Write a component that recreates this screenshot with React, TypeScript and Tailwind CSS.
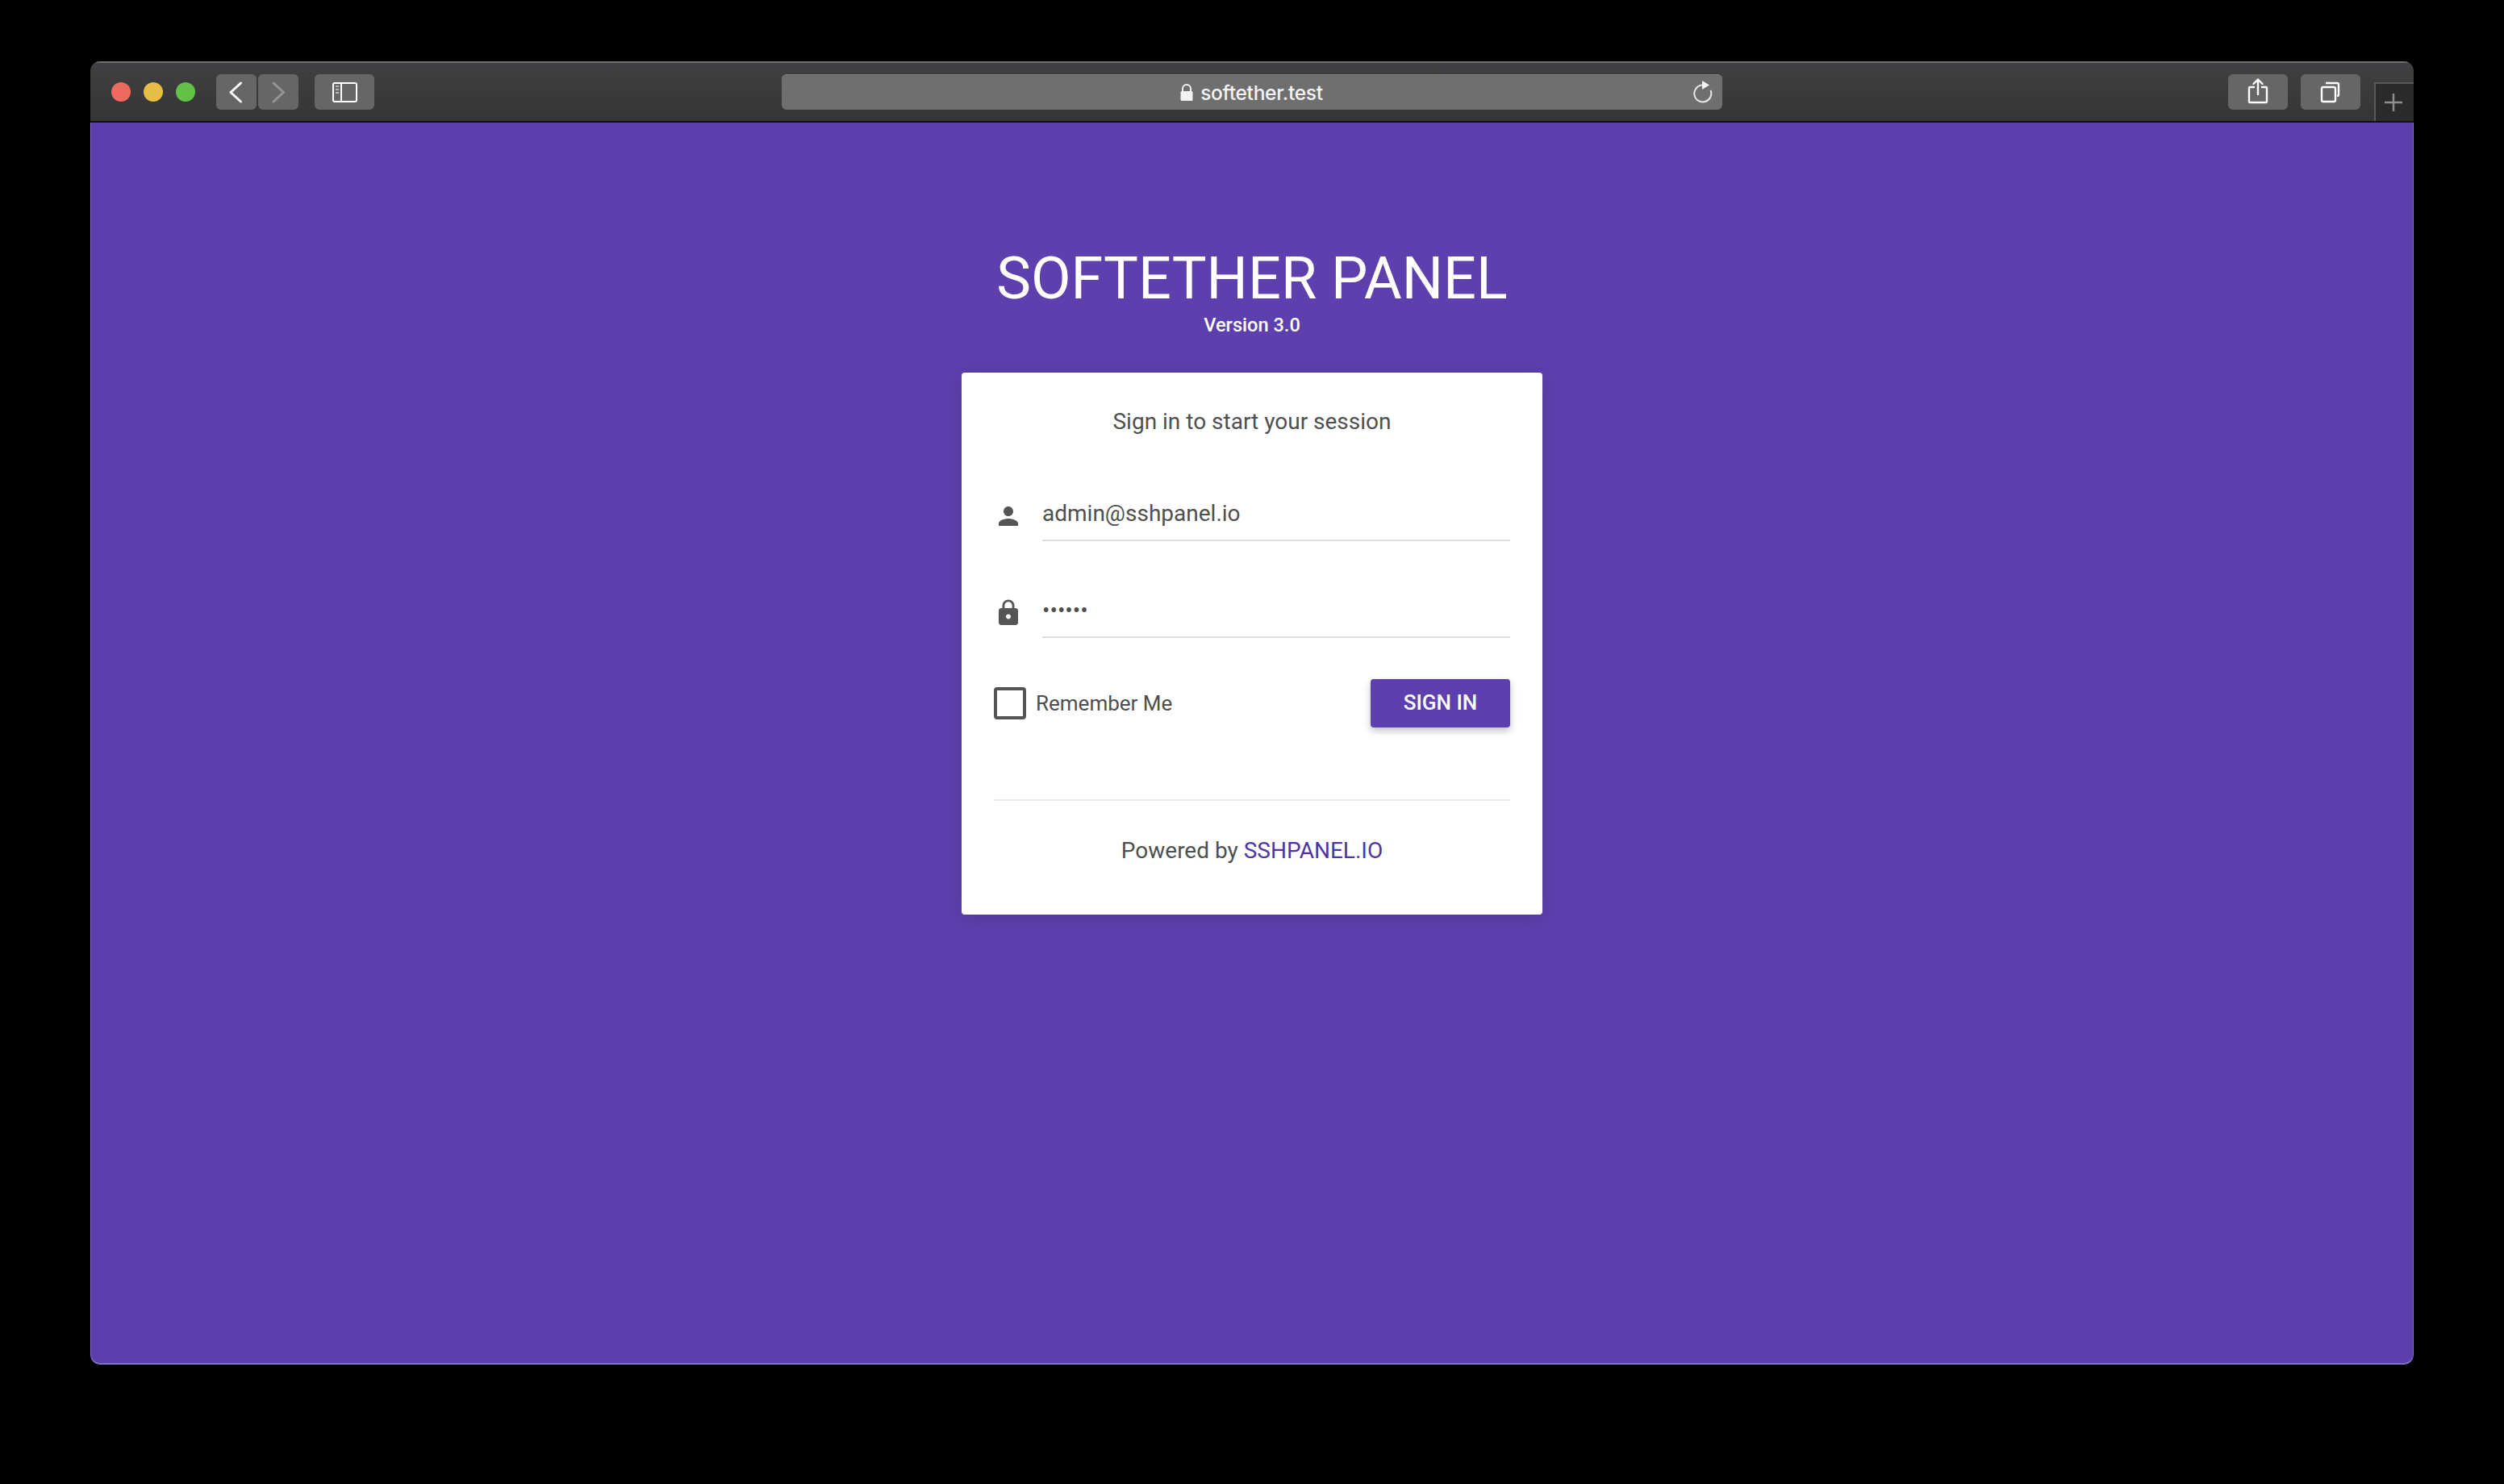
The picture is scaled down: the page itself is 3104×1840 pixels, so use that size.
import React from "react";

const Btn = ({ w, className = "", children }: { w: string; className?: string; children: React.ReactNode }) => (
  <div className={`${w} h-[44px] rounded-[6px] bg-[#666667] shrink-0 ${className}`}>{children}</div>
);

export default function App() {
  return (
    <div className="w-[3104px] h-[1840px] bg-black pt-[76px] pl-[112px] overflow-hidden font-['Roboto',sans-serif]">
      <div className="w-[2880px] h-[1616px] rounded-[12px] overflow-hidden flex flex-col">
        {/* Toolbar */}
        <div className="h-[76px] shrink-0 flex items-start pt-[14px] border-t-2 border-[#6f6f70] border-b-2 border-b-[#111] bg-gradient-to-b from-[#404042] to-[#353536]">
          <div className="flex gap-[16px] ml-[26px] mt-[10px] shrink-0">
            <div className="w-[24px] h-[24px] rounded-full bg-[#ec6a5e]" />
            <div className="w-[24px] h-[24px] rounded-full bg-[#e6bd46]" />
            <div className="w-[24px] h-[24px] rounded-full bg-[#62c146]" />
          </div>
          <Btn w="w-[50px]" className="ml-[26px]">
            <svg width="50" height="44" fill="none" stroke="#fff" strokeWidth="3" strokeLinecap="round" strokeLinejoin="round">
              <path d="M30.5 11 18 22.5 30.5 34" />
            </svg>
          </Btn>
          <Btn w="w-[50px]" className="ml-[2px]">
            <svg width="50" height="44" fill="none" stroke="#969697" strokeWidth="3" strokeLinecap="round" strokeLinejoin="round">
              <path d="M19 11 31.5 22.5 19 34" />
            </svg>
          </Btn>
          <Btn w="w-[74px]" className="ml-[20px]">
            <svg width="74" height="44" fill="none" stroke="#fff" strokeWidth="2">
              <rect x="23" y="11" width="29" height="23" rx="2" />
              <path d="M33 11v23" />
              <path d="M26 15h4M26 19h4M26 23h4" stroke="#b5b5b5" strokeWidth="2" />
            </svg>
          </Btn>
          {/* Address bar */}
          <div className="relative ml-[505px] w-[1166px] h-[44px] rounded-[6px] bg-[#6f6f70] border-t border-[#7c7c7d] shrink-0 flex items-center justify-center">
            <div className="flex items-center gap-[8px] -ml-[2px]">
              <svg width="18" height="21" viewBox="0 0 18 21" className="mt-[-1px]">
                <path d="M4 9V6a5 5 0 0 1 10 0v3" fill="none" stroke="#f2f2f2" strokeWidth="2" />
                <rect x="1.5" y="9" width="15" height="12" rx="1.5" fill="#f2f2f2" />
              </svg>
              <span className="text-[24.5px] leading-[32px] font-medium text-[#f4f4f4] font-['Inter',sans-serif] tracking-[-0.3px]">softether.test</span>
            </div>
            <svg width="24" height="28" viewBox="0 0 24 28" fill="none" className="absolute right-[12px] top-[7px]">
              <path d="M11 5.500A10.500 10.500 0 1 0 21.500 12" stroke="#e8e8e8" strokeWidth="2" />
              <path d="M11 0 20 5.500 11 11z" fill="#f2f2f2" />
            </svg>
          </div>
          <Btn w="w-[74px]" className="ml-[627px]">
            <svg width="74" height="44" fill="none" stroke="#fff" strokeWidth="2.4" strokeLinecap="round" strokeLinejoin="round">
              <path d="M32 16h-5a1 1 0 0 0-1 1v17a1 1 0 0 0 1 1h20a1 1 0 0 0 1-1V17a1 1 0 0 0-1-1h-5" />
              <path d="M37 25V7M31.5 12 37 6.500l5.500 5.500" />
            </svg>
          </Btn>
          <Btn w="w-[74px]" className="ml-[16px]">
            <svg width="74" height="44" fill="none" stroke="#fff" strokeWidth="2.4" strokeLinejoin="round">
              <rect x="26" y="16" width="17" height="18" rx="2" />
              <path d="M31 11h14a2 2 0 0 1 2 2v12a2 2 0 0 1-2 2" />
            </svg>
          </Btn>
          <div className="ml-[17px] flex-1 h-[48px] mt-[10px] self-start bg-[#2b2b2c] border-l-2 border-t-2 border-[#59595a] flex items-center justify-center pr-[4px]">
            <svg width="24" height="24" stroke="#8f8f90" strokeWidth="2.4">
              <path d="M1 12h22M12 1v22" />
            </svg>
          </div>
        </div>

        {/* Page */}
        <div className="flex-1 bg-[#5e3fae] border-x border-b-2 border-[#8571c4] rounded-b-[12px] flex flex-col items-center">
          <h1 className="mt-[152px] text-[72px] leading-[84px] font-normal text-white text-center">SOFTETHER PANEL</h1>
          <p className="mt-[-2px] text-[23.6px] leading-[34px] font-medium text-white text-center">Version 3.0</p>
          <div className="mt-[42px] w-[720px] h-[672px] bg-white rounded-[4px] shadow-[0_4px_24px_rgba(0,0,0,0.14)] px-[40px] flex flex-col text-[#4f4f4f]">
            <p className="mt-[41px] text-[28px] leading-[40px] text-center">Sign in to start your session</p>

            <div className="mt-[73px] flex items-start">
              <svg width="36" height="36" viewBox="0 0 24 24" fill="#555" className="mt-[6px] shrink-0">
                <path d="M12 12c2.21 0 4-1.79 4-4s-1.79-4-4-4-4 1.79-4 4 1.790 4 4 4zm0 2c-2.670 0-8 1.340-8 4v2h16v-2c0-2.660-5.330-4-8-4z" />
              </svg>
              <div className="ml-[24px] flex-1 h-[55px] pt-[1px] border-b-2 border-[#dcdcdc] text-[28px] leading-[40px]">admin@sshpanel.io</div>
            </div>

            <div className="mt-[65px] flex items-start">
              <svg width="36" height="36" viewBox="0 0 24 24" fill="#555" className="mt-[6px] shrink-0">
                <path d="M18 8h-1V6c0-2.760-2.240-5-5-5S7 3.240 7 6v2H6c-1.100 0-2 .9-2 2v10c0 1.100.9 2 2 2h12c1.100 0 2-.9 2-2V10c0-1.100-.9-2-2-2zm-6 9c-1.100 0-2-.9-2-2s.9-2 2-2 2 .9 2 2-.9 2-2 2zm3.100-9H8.900V6c0-1.710 1.390-3.100 3.100-3.100 1.710 0 3.100 1.390 3.100 3.100v2z" />
              </svg>
              <div className="ml-[24px] flex-1 h-[55px] pt-[1px] border-b-2 border-[#dcdcdc] text-[28px] leading-[40px]">••••••</div>
            </div>

            <div className="mt-[51px] flex items-center justify-between">
              <div className="flex items-center">
                <div className="w-[40px] h-[40px] border-[4px] border-[#555] rounded-[4px]" />
                <span className="ml-[12px] text-[26px] leading-[40px]">Remember Me</span>
              </div>
              <button className="w-[173px] h-[60px] rounded-[4px] bg-[#5e3fae] text-white text-[26px] font-medium leading-[40px] shadow-[0_4px_10px_rgba(0,0,0,0.25)] pb-[2px]">SIGN IN</button>
            </div>

            <div className="mt-[89px] h-[2px] bg-[#eeeeee]" />
            <p className="mt-[40px] text-[28px] leading-[44px] text-center">
              Powered by <a className="text-[#5034a3]">SSHPANEL.IO</a>
            </p>
          </div>
        </div>
      </div>
    </div>
  );
}
